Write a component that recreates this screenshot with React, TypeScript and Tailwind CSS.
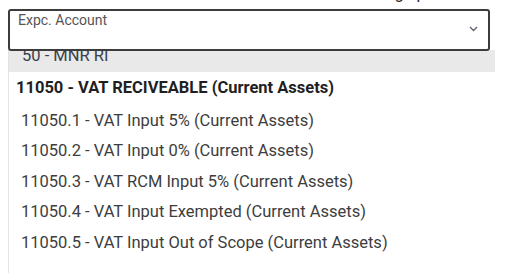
import React from "react";

const items = [
  "11050.1 - VAT Input 5% (Current Assets)",
  "11050.2 - VAT Input 0% (Current Assets)",
  "11050.3 - VAT RCM Input 5% (Current Assets)",
  "11050.4 - VAT Input Exempted (Current Assets)",
  "11050.5 - VAT Input Out of Scope (Current Assets)",
];

export default function App() {
  return (
    <div className="w-[512px] h-[273px] bg-white overflow-hidden font-['Roboto',sans-serif]">
      <div className="h-[9px] overflow-hidden relative">
        <span className="absolute left-[386px] -top-[15px] text-[16px] leading-[18px] text-[#222]">ng up</span>
      </div>
      <div className="relative z-10 ml-[8px] w-[482px] h-[42px] border-2 border-[#3c3c3c] rounded-[3px] bg-white flex justify-between pl-[8px] pr-[10px] pt-[1px]">
        <span className="text-[14px] leading-[16px] text-[#555]">Expc. Account</span>
        <svg width="9" height="6" viewBox="0 0 9 6" className="mt-[14px]">
          <path d="M1 1 L4.5 4.5 L8 1" fill="none" stroke="#5a6070" strokeWidth="1.3" />
        </svg>
      </div>
      <div className="ml-[8px] w-[487px] -mt-[1px] h-[232px] overflow-hidden border-l border-[#e3e3e3]">
        <div className="-mt-[9px]">
          <div className="h-[31px] bg-[#e9e9e9] flex items-center pl-[13px] text-[16.5px] text-[#3a3f4a]">
            50 - MNR RI
          </div>
          <div className="h-[32px] flex items-center pl-[7px] text-[16.5px] font-bold text-[#1f1f1f]">
            11050 - VAT RECIVEABLE (Current Assets)
          </div>
          <div className="pt-[2px]">
            {items.map((t) => (
              <div key={t} className="h-[30.5px] flex items-center pl-[12px] text-[16.5px] text-[#3d3d3d]">
                {t}
              </div>
            ))}
          </div>
        </div>
      </div>
    </div>
  );
}
